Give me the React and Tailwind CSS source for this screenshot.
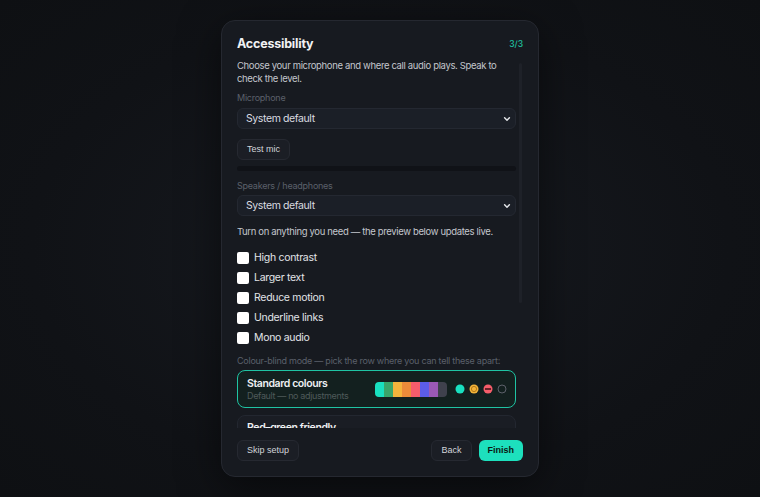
import React from "react";

const sans = { fontFamily: '"Inter", "Noto Sans", sans-serif' };
const arial = { fontFamily: '"Liberation Sans", Arial, sans-serif' };

function Chevron() {
  return (
    <svg width="8" height="8" viewBox="0 0 10 10" className="absolute right-[4px] top-1/2 -translate-y-1/2">
      <path d="M2 3.5 L5 6.5 L8 3.5" fill="none" stroke="#e5e7eb" strokeWidth="1.8" strokeLinecap="round" strokeLinejoin="round" />
    </svg>
  );
}

function Select() {
  return (
    <div className="relative h-[21px] rounded-[6px] border border-[#242831] bg-[#1b1f27] flex items-center pl-[8px] text-[10.5px] tracking-[-0.4px] text-[#d9dbe0]">
      System default
      <Chevron />
    </div>
  );
}

function Check({ label }) {
  return (
    <div className="h-[20px] flex items-center gap-[5px]">
      <div className="w-[12px] h-[12px] rounded-[2px] bg-white" />
      <span className="text-[10.5px] tracking-[-0.3px] text-[#e2e4e8]">{label}</span>
    </div>
  );
}

const swatches = ["#19e0c0", "#3aa56a", "#f4b43c", "#ec8b3a", "#f65c6c", "#5c5ce8", "#9b59b6", "#3f414d"];

export default function App() {
  return (
    <div
      className="w-full min-h-screen h-[497px] flex justify-center pt-[20px] bg-[radial-gradient(ellipse_at_center,#171a20_0%,#101216_65%,#0e1013_100%)]"
      style={sans}
    >
      <div className="w-[318px] h-[457px] rounded-[14px] border border-[#252830] bg-[#171a20] flex flex-col px-[15px] pt-[14px] pb-[15px] shadow-[0_10px_40px_rgba(0,0,0,0.5)]">
        <div className="flex items-center justify-between h-[18px]">
          <h1 className="text-[12.5px] font-bold text-[#f1f2f4] tracking-[-0.2px]">Accessibility</h1>
          <span className="text-[8.5px] text-[#1fc3a0] font-medium">3/3</span>
        </div>

        <div className="relative mt-[6px] h-[369px] overflow-hidden">
          <div className="absolute right-[1px] top-[4px] w-[3px] h-[240px] rounded-full bg-[#1e2128]" />
          <div className="w-[279px] flex flex-col">
            <p className="text-[9.5px] leading-[13px] tracking-[-0.35px] text-[#c3c6cd]">
              Choose your microphone and where call audio plays. Speak to check the level.
            </p>
            <div className="mt-[7px] text-[9px] leading-[12px] tracking-[-0.25px] text-[#5b606b]">Microphone</div>
            <div className="mt-[4px]"><Select /></div>
            <button
              className="mt-[10px] self-start h-[21px] px-[9px] rounded-[6px] border border-[#262931] bg-[#1b1e25] text-[9px] text-[#d2d5da]"
              style={arial}
            >
              Test mic
            </button>
            <div className="mt-[6px] h-[5px] rounded-full bg-[#101217]" />
            <div className="mt-[9px] text-[9px] leading-[12px] tracking-[-0.25px] text-[#5b606b]">Speakers / headphones</div>
            <div className="mt-[3px]"><Select /></div>
            <p className="mt-[9px] text-[9.5px] leading-[13px] tracking-[-0.35px] text-[#c3c6cd]">
              Turn on anything you need — the preview below updates live.
            </p>
            <div className="mt-[10px] flex flex-col">
              <Check label="High contrast" />
              <Check label="Larger text" />
              <Check label="Reduce motion" />
              <Check label="Underline links" />
              <Check label="Mono audio" />
            </div>
            <div className="mt-[7px] text-[9px] leading-[12px] tracking-[-0.25px] text-[#5b606b] whitespace-nowrap">
              Colour-blind mode — pick the row where you can tell these apart:
            </div>
            <div className="mt-[3px] h-[38px] rounded-[8px] border-[1.5px] border-[#1fc3a3] bg-[#13201f] flex items-center pl-[9px] pr-[8px]">
              <div className="flex-1 flex flex-col">
                <span className="text-[10.5px] leading-[13px] font-semibold tracking-[-0.4px] text-[#eef0f2]">Standard colours</span>
                <span className="text-[9px] leading-[12px] tracking-[-0.35px] text-[#4f5a5a]">Default — no adjustments</span>
              </div>
              <div className="flex h-[15px] w-[72px] rounded-[4px] overflow-hidden">
                {swatches.map((c) => (
                  <div key={c} className="flex-1" style={{ background: c }} />
                ))}
              </div>
              <svg width="52" height="10" viewBox="0 0 52 10" className="ml-[8px]">
                <circle cx="5" cy="5" r="4.5" fill="#19e0c0" />
                <circle cx="19" cy="5" r="4.5" fill="#f2b43a" />
                <circle cx="19" cy="5" r="2.6" fill="none" stroke="#b37a17" strokeWidth="1" />
                <circle cx="33" cy="5" r="4.5" fill="#f55d6a" />
                <rect x="30" y="4.2" width="6" height="1.6" fill="#4a1419" />
                <circle cx="47" cy="5" r="4" fill="none" stroke="#5b5f69" strokeWidth="1" />
              </svg>
            </div>
            <div className="mt-[7px] h-[38px] rounded-[8px] border border-[#232730] bg-[#1a1d24] flex flex-col pl-[9px] pt-[5px]">
              <span className="text-[10.5px] leading-[13px] font-semibold tracking-[-0.4px] text-[#eef0f2]">Red–green friendly</span>
            </div>
          </div>
        </div>

        <div className="mt-auto flex items-center">
          <button
            className="h-[21px] px-[9px] rounded-[6px] border border-[#262931] bg-[#1b1e25] text-[9px] text-[#d2d5da]"
            style={arial}
          >
            Skip setup
          </button>
          <div className="ml-auto flex gap-[7px]">
            <button
              className="h-[21px] px-[9px] rounded-[6px] border border-[#262931] bg-[#1b1e25] text-[9px] text-[#d2d5da]"
              style={arial}
            >
              Back
            </button>
            <button
              className="h-[21px] px-[9px] rounded-[6px] bg-[#1de0bd] text-[9px] font-bold text-[#0b1512]"
              style={arial}
            >
              Finish
            </button>
          </div>
        </div>
      </div>
    </div>
  );
}
